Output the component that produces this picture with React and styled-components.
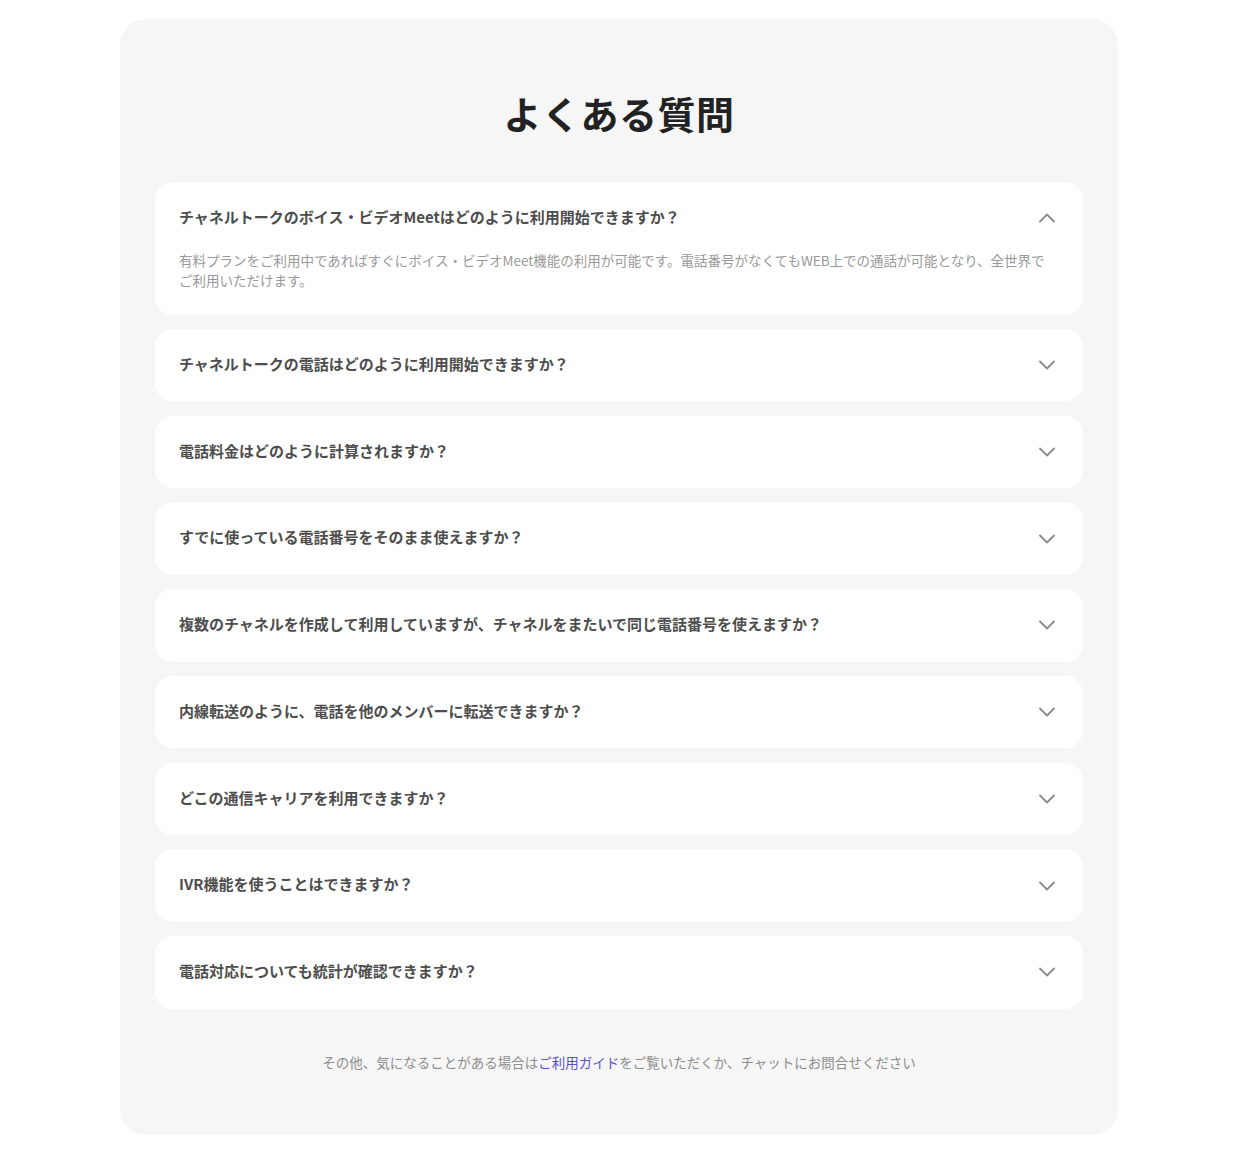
import React, { useState } from "react";
import styled, { createGlobalStyle } from "styled-components";

const GlobalStyle = createGlobalStyle`
    body {
        margin: 0;
        background: #ffffff;
        font-family: "Noto Sans CJK JP", "Noto Sans", sans-serif;
    }
`

const faqs = [
    {
        q: "チャネルトークのボイス・ビデオMeetはどのように利用開始できますか？",
        a: "有料プランをご利用中であればすぐにボイス・ビデオMeet機能の利用が可能です。電話番号がなくてもWEB上での通話が可能となり、全世界でご利用いただけます。"
    },
    { q: "チャネルトークの電話はどのように利用開始できますか？", a: "" },
    { q: "電話料金はどのように計算されますか？", a: "" },
    { q: "すでに使っている電話番号をそのまま使えますか？", a: "" },
    { q: "複数のチャネルを作成して利用していますが、チャネルをまたいで同じ電話番号を使えますか？", a: "" },
    { q: "内線転送のように、電話を他のメンバーに転送できますか？", a: "" },
    { q: "どこの通信キャリアを利用できますか？", a: "" },
    { q: "IVR機能を使うことはできますか？", a: "" },
    { q: "電話対応についても統計が確認できますか？", a: "" },
]

const Chevron = ({ up }) => (
    <svg width="16" height="10" viewBox="0 0 16 10" fill="none">
        <polyline
            points={up ? "1,8.5 8,1.5 15,8.5" : "1,1.5 8,8.5 15,1.5"}
            stroke="#8a8a8a"
            strokeWidth="1.8"
            strokeLinecap="round"
            strokeLinejoin="round" />
    </svg>
)

const App = () => {
    const [open, setOpen] = useState(0)

    return (
        <>
            <GlobalStyle />
            <Panel>
                <Title>よくある質問</Title>
                <List>
                    {faqs.map((item, index) => {
                        const isOpen = open === index
                        return (
                            <Item key={index}>
                                <Question onClick={() => setOpen(isOpen ? -1 : index)}>
                                    <span>{item.q}</span>
                                    <Chevron up={isOpen} />
                                </Question>
                                {isOpen && item.a && <Answer>{item.a}</Answer>}
                            </Item>
                        )
                    })}
                </List>
                <Footer>
                    その他、気になることがある場合は<GuideLink href="#">ご利用ガイド</GuideLink>をご覧いただくか、チャットにお問合せください
                </Footer>
            </Panel>
        </>
    )
}

const Panel = styled.section`
    width: 998px;
    box-sizing: border-box;
    margin: 19px auto 42px;
    padding: 67px 35px 63px;
    background: #f6f6f6;
    border-radius: 26px;
`

const Title = styled.h2`
    margin: 0 0 43px;
    text-align: center;
    font-size: 38px;
    line-height: 53px;
    font-weight: 700;
    color: #222222;
    letter-spacing: 0.5px;
`

const List = styled.div`
    display: flex;
    flex-direction: column;
    gap: 14.25px;
`

const Item = styled.div`
    background: #ffffff;
    border-radius: 18px;
`

const Question = styled.div`
    display: flex;
    align-items: center;
    justify-content: space-between;
    gap: 16px;
    padding: 24px 28px 26px 24px;
    font-size: 15px;
    line-height: 22.5px;
    font-weight: 700;
    color: #4d4d4d;
    cursor: pointer;

    svg {
        flex-shrink: 0;
        margin-top: 2px;
    }
`

const Answer = styled.p`
    margin: -5px 0 0;
    padding: 0 30px 25px 24px;
    font-size: 13.5px;
    line-height: 20px;
    color: #999999;
`

const Footer = styled.p`
    margin: 43px 0 0;
    text-align: center;
    font-size: 13.5px;
    line-height: 20px;
    color: #8c8c8c;
`

const GuideLink = styled.a`
    color: #5a4fc8;
    text-decoration: none;
`

export default App
